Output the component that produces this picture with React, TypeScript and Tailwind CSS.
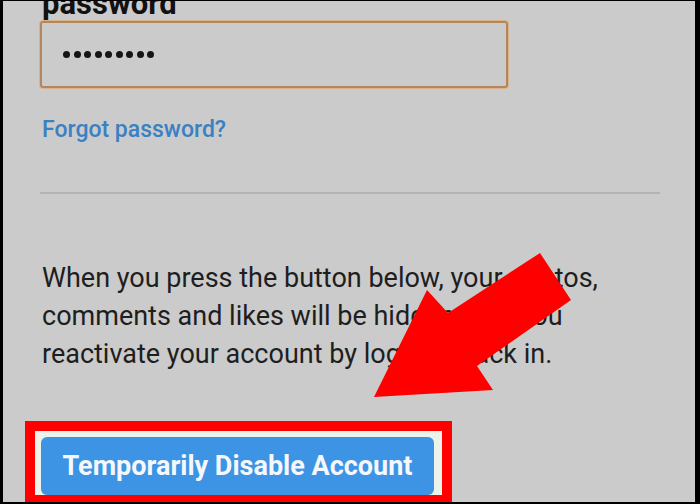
// Screenshot recreation: account settings — temporarily disable account, with annotation arrow.
export default function App() {
  return (
    <div
      className="relative h-[504px] w-[700px] overflow-hidden bg-black pb-[2px] pl-[3px] pr-[5px] pt-[1px]"
      style={{ fontFamily: "Roboto, 'Liberation Sans', sans-serif" }}
    >
      <div className="relative h-full overflow-hidden bg-[#cbcbcb]">
        <div className="flex flex-col">
          <div className="ml-[39px] mt-[-12px] text-[31px] font-bold leading-[30px] text-[#111]">password</div>

          <div className="ml-[37px] mt-[2px] flex h-[67px] w-[468px] items-center rounded-[3px] border-2 border-[#b5865c] pl-[21px] shadow-[0_0_0_1px_#d8b48e]">
            <div className="flex gap-[3.5px]">
              {Array.from({ length: 9 }).map((_, i) => (
                <span key={i} className="h-[7px] w-[7px] rounded-full bg-[#151515]" />
              ))}
            </div>
          </div>

          <a className="ml-[39px] mt-[30px] w-fit text-[23px] font-medium leading-[24px] text-[#3a80c3]">
            Forgot password?
          </a>

          <div className="ml-[37px] mt-[50px] h-[2px] w-[620px] bg-[#b3b3b3]" />

          <p className="ml-[39px] mt-[65px] w-[620px] text-[27px] leading-[38px] text-[#1e1e1e]">
            When you press the button below, your photos,
            <br />
            comments and likes will be hidden until you
            <br />
            reactivate your account by logging back in.
          </p>

          <div className="ml-[22px] mt-[48px] h-[84px] w-[427px] shrink-0 border-[10px] border-[#ff0000] bg-[#eef3ea] pl-[6px] pr-[8px] pt-[6px]">
            <button className="flex h-[58px] w-full items-center justify-center rounded-[6px] bg-[#3d94e4] text-[27px] font-bold text-[#f4f8fc]">
              Temporarily Disable Account
            </button>
          </div>
        </div>

        {/* annotation arrow */}
        <svg className="pointer-events-none absolute left-0 top-0" width="692" height="501" viewBox="3 1 692 501">
          <polygon points="540,253 571,300 477,366 493,390 374,397 427,290 448,313" fill="#ff0000" />
        </svg>
      </div>
    </div>
  );
}
